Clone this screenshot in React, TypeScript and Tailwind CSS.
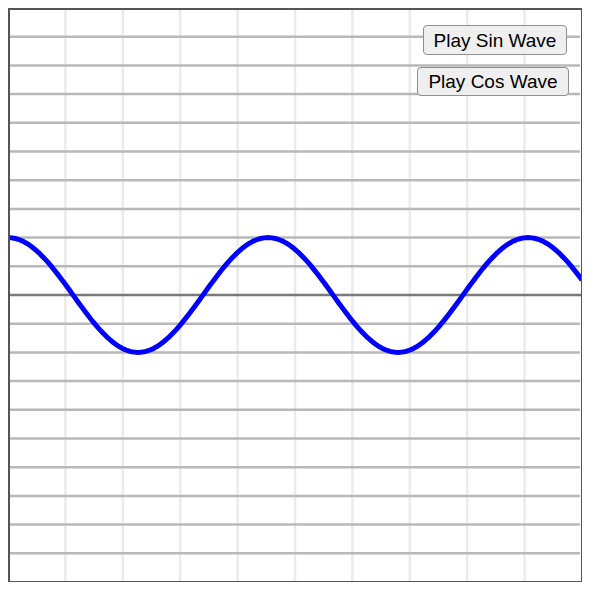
import React from 'react';

const SIZE = 574;
const ROWS = 20;
const COLS = 10;
const AMP = 57.4;
const PERIOD = 260;

function wavePath() {
  const pts: string[] = [];
  for (let x = 0; x <= SIZE; x += 2) {
    const y = SIZE / 2 - AMP * Math.cos((2 * Math.PI * x) / PERIOD);
    pts.push(`${x === 0 ? 'M' : 'L'}${x.toFixed(1)},${y.toFixed(2)}`);
  }
  return pts.join(' ');
}

export default function App() {
  const rowH = SIZE / ROWS;
  const colW = SIZE / COLS;

  return (
    <div className="min-h-[601px] bg-white p-2" style={{ fontFamily: '"Liberation Sans", Arial, sans-serif' }}>
      <div className="relative w-[574px] h-[574px]">
        <svg width={SIZE} height={SIZE} viewBox={`0 0 ${SIZE} ${SIZE}`} className="block">
          {/* vertical grid */}
          {Array.from({ length: COLS - 1 }, (_, i) => (
            <line key={`v${i}`} x1={(i + 1) * colW} y1={0} x2={(i + 1) * colW} y2={SIZE} stroke="#ebebeb" strokeWidth={2.5} />
          ))}
          {/* horizontal grid */}
          {Array.from({ length: ROWS - 1 }, (_, i) =>
            i + 1 === ROWS / 2 ? null : (
              <line key={`h${i}`} x1={0} y1={(i + 1) * rowH} x2={SIZE - 2} y2={(i + 1) * rowH} stroke="#b8b8b8" strokeWidth={2.5} />
            )
          )}
          {/* axis */}
          <line x1={0} y1={SIZE / 2} x2={SIZE} y2={SIZE / 2} stroke="#7a7a7a" strokeWidth={2.5} />
          {/* wave */}
          <path d={wavePath()} fill="none" stroke="#0000ff" strokeWidth={5} strokeLinejoin="round" />
          {/* frame */}
          <line x1={1} y1={0} x2={1} y2={SIZE} stroke="#555555" strokeWidth={2} />
          <line x1={0} y1={1} x2={SIZE} y2={1} stroke="#555555" strokeWidth={2} />
          <line x1={SIZE - 0.5} y1={0} x2={SIZE - 0.5} y2={SIZE} stroke="#555555" strokeWidth={1} />
          <line x1={0} y1={SIZE - 0.5} x2={SIZE} y2={SIZE - 0.5} stroke="#555555" strokeWidth={1} />
        </svg>

        <button className="absolute left-[415px] top-[17px] w-[144px] h-[30px] rounded-[4px] border border-[#8f8f8f] bg-[#efefef] text-[19px] leading-none text-black">
          Play Sin Wave
        </button>
        <button className="absolute left-[409px] top-[59px] w-[152px] h-[29px] rounded-[4px] border border-[#8f8f8f] bg-[#efefef] text-[19px] leading-none text-black">
          Play Cos Wave
        </button>
      </div>
    </div>
  );
}
